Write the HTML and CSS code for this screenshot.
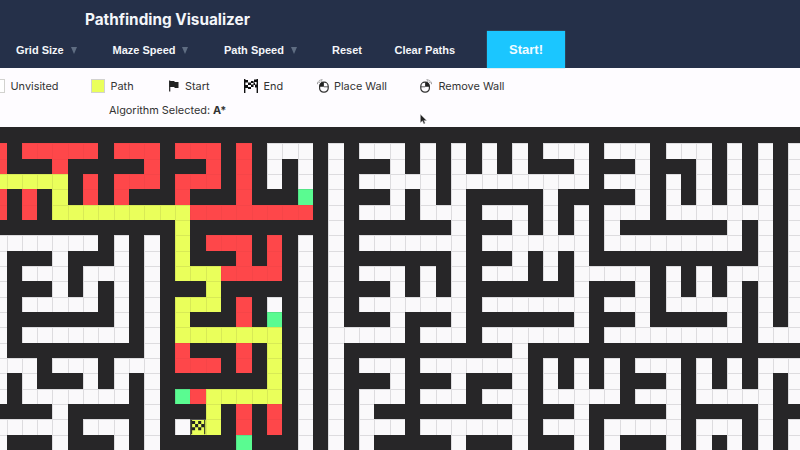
FILE: index.html
```
<!DOCTYPE html>
<html lang="en">
<head>
<meta charset="utf-8">
<title>Pathfinding Visualizer</title>
<link rel="stylesheet" href="styles.css">
</head>
<body>
<header>
  <h1>Pathfinding Visualizer</h1>
  <nav>
    <a class="grid-size">Grid Size<i class="caret"></i></a>
    <a class="maze-speed">Maze Speed<i class="caret"></i></a>
    <a class="path-speed">Path Speed<i class="caret"></i></a>
    <a class="reset">Reset</a>
    <a class="clear">Clear Paths</a>
    <button>Start!</button>
  </nav>
</header>
<section class="info">
  <div class="legend">
    <span class="item unvisited"><i class="swatch white"></i><b>Unvisited</b></span>
    <span class="item path"><i class="swatch yellow"></i><b>Path</b></span>
    <span class="item start"><svg width="12" height="14" viewBox="0 0 12 14"><path d="M1.700 1.500v11" stroke="#222" stroke-width="1.200"/><path d="M1.500 2h4.500l1 1h3.500v6H7L6 8H1.500z" fill="#222"/></svg><b>Start</b></span>
    <span class="item end"><svg width="14" height="14" viewBox="0 0 14 14"><path d="M.7 0v14M13.3 0v14" stroke="#111" stroke-width="1.4"/><path d="M1 1h3v2.5H1zM7 2h2.5v2H7zM10 .5h3V3h-3zM4 3.5h3V6H4zM9.500 3.500H11V6H9.500zM1 6h3v3H1zM7 5.500h2.500V8H7zM11 5.500h2V8.500h-2zM4 8h3v2H4z" fill="#111"/></svg><b>End</b></span>
    <span class="item place"><svg width="12" height="14" viewBox="0 0 12 14"><rect x="2.600" y="3.200" width="8.600" height="10" rx="4" fill="#fefcff" stroke="#333" stroke-width="1.200"/><path d="M2.600 7.800V7q0-3.800 4.300-3.800v4.600z" fill="#222"/><path d="M6.900 7.800h4.300" stroke="#333" stroke-width=".8"/><path d="M.5 5.200Q.5 1 5.500.7M1.800 4Q2.500 2.200 5 2" fill="none" stroke="#777" stroke-width=".8" stroke-dasharray="2 .7"/></svg><b>Place Wall</b></span>
    <span class="item remove"><svg width="12" height="14" viewBox="0 0 12 14"><rect x=".8" y="3.200" width="8.600" height="10" rx="4" fill="#fefcff" stroke="#333" stroke-width="1.200"/><path d="M9.400 7.800V7q0-3.800-4.300-3.800v4.600z" fill="#222"/><path d="M5.100 7.800H.8" stroke="#333" stroke-width=".8"/><path d="M11.500 5.200Q11.500 1 6.500.7M10.200 4Q9.500 2.200 7 2" fill="none" stroke="#777" stroke-width=".8" stroke-dasharray="2 .7"/></svg><b>Remove Wall</b></span>
  </div>
  <p>Algorithm Selected: <strong>A*</strong></p>
</section>
<main id="maze"></main>
<svg class="cursor" width="7" height="11" viewBox="0 0 7 11"><path d="M.5.5v8l2-1.700 1.300 3 1.300-.6-1.300-2.800h2.700z" fill="#222" stroke="#aaa" stroke-width=".4"/></svg>
<script src="maze.js"></script>
</body>
</html>
```
FILE: styles.css
```
* { box-sizing: border-box; }
body { margin: 0; width: 800px; height: 450px; overflow: hidden; background: #272628; font-family: Inter, sans-serif; }
header { height: 68px; background: #253049; color: #f4f6fa; display: flex; flex-direction: column; }
h1 { margin: 0; padding: 8px 0 0 85px; height: 31px; font-size: 15.3px; line-height: 23px; font-weight: 700; white-space: nowrap; }
nav { display: flex; height: 37px; align-items: center; font: 700 11px/37px "Liberation Sans", sans-serif; white-space: nowrap; }
nav a { display: flex; align-items: center; padding-top: 1px; }
.grid-size { width: 96.5px; margin-left: 16px; }
.maze-speed { width: 111.5px; }
.path-speed { width: 108px; }
.reset { width: 62.5px; }
.clear { width: 92.5px; }
.caret { margin-left: 7px; border: 3.5px solid transparent; border-top: 7px solid #5f6d82; border-bottom: 0; }
button { width: 78px; height: 37px; padding: 0; border: 0; background: #1bc6ff; color: #f0fbff; font: 700 13px/37px "Liberation Sans", sans-serif; box-shadow: 0 0 1px #5aa; }
.info { height: 59px; background: #fefcff; color: #333; overflow: hidden; }
.legend { display: flex; height: 30px; padding-top: 5px; margin-left: -9px; }
.item { display: flex; align-items: center; height: 26px; white-space: nowrap; flex: none; }
.item svg { flex: none; }
.item b { font-weight: 400; font-size: 10.9px; margin-left: 5.5px; }
.swatch { width: 14px; height: 14px; border: 1px solid #d2d2cf; }
.white { background: #fff; }
.yellow { background: #eaff5b; }
.unvisited { width: 100px; }
.path { width: 76.5px; }
.start { width: 76.5px; }
.end { width: 73px; }
.place { width: 103px; }
.place b { margin-left: 5px; }
.remove b { margin-left: 6.5px; }
p { margin: 0; padding-left: 109px; font-size: 10.9px; line-height: 25px; }
#maze { display: grid; grid-template-columns: repeat(53, 15.34px); grid-auto-rows: 15.34px; margin: 1px 0 0 -8.84px; width: 814px; }
.w, .r, .y, .g, .e { border: 0 solid; border-width: 1px 0 0 1px; }
.w { background: #faf9fb; border-color: #dddcdf; }
.r { background: #fe474a; border-color: #f64548; }
.y { background: #eaff5b; border-color: #d8ea56; }
.g { background: #5afb91; border-color: #54e487; }
.e { background: #eaff5b; border-color: #555; }
.e svg { display: block; width: 100%; height: 100%; }
.cursor { position: absolute; left: 420px; top: 114px; }
```
FILE: maze.js
```
// Each row lists its open cells as <kind><first>[-<last>]; everything else is wall.
const rows = [
  "",
  "r0 r2-6 r8-10 r12-14 r16 w18-20 w22 w24-26 w28 w30 w32 w34 w36-38 w40-42 w44-46 w48 w50 w52",
  "r0 r4 r10 r14 r16 w18 w20 w22 w26 w28 w30 w32 w34 w38 w42 w46 w48 w50 w52",
  "y0-4 r6 r8-10 r12-14 r16 w18 w20 w22 w24-28 w30-38 w40-42 w44 w46 w48 w50 w52",
  "r0 r2 y4 r6 r8 r12 r16 g20 w22 w26 w28 w30 w36 w42 w44 w46 w48 w50 w52",
  "r0 r2 y4-12 r13-20 w22 w24-26 w28-30 w32-34 w36 w38 w40-42 w44-50 w52",
  "y12 w22 w30 w34 w36 w38 w40 w48 w50 w52",
  "w0-6 w8 w10 y12 r14-16 r18 w20 w22 w24-30 w32-38 w40-48 w50 w52",
  "w0 w4 w8 w10 y12 r16 r18 w20 w22 w30 w34 w36 w38 w50 w52",
  "w0 w2-4 w6-8 w10 y12-14 r15-18 w20 w22 w24-26 w28 w30 w32-34 w36 w38-42 w44 w46 w48-50 w52",
  "w0 w4 w6 w8 w10 y14 w20 w22 w26 w28 w30 w38 w42 w44 w46 w48 w50 w52",
  "w0 w2-6 w8 w10 y12-14 r16 w18 w20 w22 w24-30 w32-38 w40-42 w44-48 w50 w52",
  "w0 w8 w10 y12 r16 g18 w20 w22 w26 w30 w38 w42 w48 w50 w52",
  "w0 w2-8 w10 y12-18 w20 w22-26 w28-30 w32-38 w40-48 w50-52",
  "w0 w10 r12 r16 y18 w20 w22 w34",
  "w0-2 w4-6 w8-10 r12-14 r16 y18 w20 w22 w24-26 w28-34 w36 w38 w40 w42-44 w46 w48 w50-52",
  "w0 w2 w6 w8 w10 y18 w20 w22 w26 w30 w34 w36 w38 w40 w44 w46 w48 w50 w52",
  "w0 w2-8 w10 g12 r13 y14-18 w20 w22 w24-26 w28-30 w32-34 w36-40 w42-44 w46-50 w52",
  "w4 w10 y14 r16 r18 w20 w22 w24 w34 w38 w44 w50",
  "w0-4 w6-8 w10 w12 e13 y14 r16 r18 w20 w22 w24-26 w28-34 w36-38 w40-44 w46-48 w50 w52",
  "w0 w4 w8 w10 g16 w20 w22 w24 w30 w34 w38 w40 w44 w46 w48 w50 w52"
];
const flag = '<svg viewBox="0 0 14 14"><path d="M.6 0v14M13.400 0v14" stroke="#222" stroke-width="1"/><path d="M1 1h3v3H1zM7 1h3v3H7zM4 4h3v3H4zM10 4h3v3h-3zM1 7h3v3H1zM7 7h3v3H7z" fill="#222"/></svg>';
const maze = document.getElementById("maze");
rows.forEach(row => {
  const kinds = Array(53).fill("");
  row.split(" ").filter(Boolean).forEach(run => {
    const [a, b = a] = run.slice(1).split("-").map(Number);
    kinds.fill(run[0], a, b + 1);
  });
  kinds.forEach(kind => {
    const cell = document.createElement("div");
    cell.className = kind;
    if (kind === "e") cell.innerHTML = flag;
    maze.append(cell);
  });
});
```
